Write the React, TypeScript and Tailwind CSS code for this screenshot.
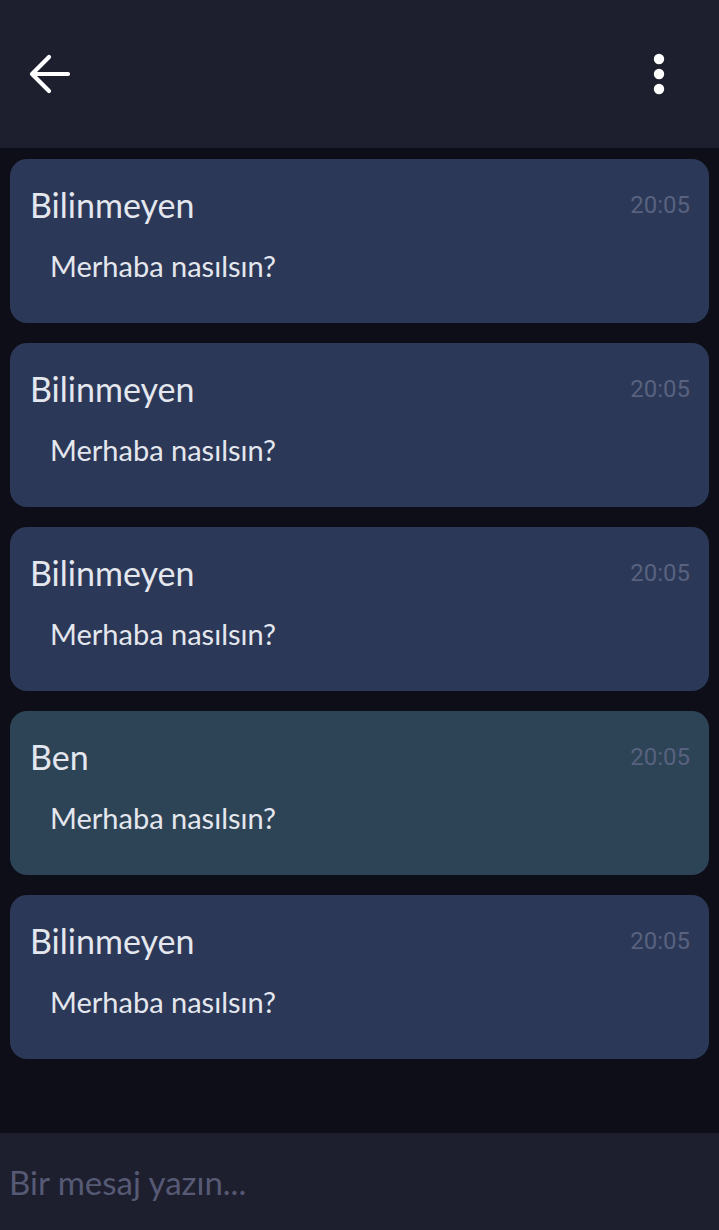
const messages = [
  { from: "Bilinmeyen", text: "Merhaba nasılsın?", time: "20:05", mine: false },
  { from: "Bilinmeyen", text: "Merhaba nasılsın?", time: "20:05", mine: false },
  { from: "Bilinmeyen", text: "Merhaba nasılsın?", time: "20:05", mine: false },
  { from: "Ben", text: "Merhaba nasılsın?", time: "20:05", mine: true },
  { from: "Bilinmeyen", text: "Merhaba nasılsın?", time: "20:05", mine: false },
]

const BackArrow = () => (
  <svg width="44" height="44" viewBox="0 0 44 44" fill="none">
    <path
      d="M40 22 H4 M21 5 L4 22 L21 39"
      stroke="#ffffff"
      strokeWidth="4.2"
      strokeLinecap="round"
      strokeLinejoin="round"
    />
  </svg>
)

const MoreDots = () => (
  <svg width="12" height="42" viewBox="0 0 12 42" fill="#ffffff">
    <circle cx="6" cy="6" r="5.2" />
    <circle cx="6" cy="21" r="5.2" />
    <circle cx="6" cy="36" r="5.2" />
  </svg>
)

const MessageCard = ({ from, text, time, mine }: { from: string; text: string; time: string; mine: boolean }) => {
  return (
    <div
      className={`h-[164px] rounded-[17px] pl-[20px] pr-[19px] pt-[26px] ${mine ? "bg-[#2d4356]" : "bg-[#2c3857]"}`}
    >
      <div className="flex items-start justify-between">
        <h3 className="text-[34px] leading-[40px] text-[#e4e7ee] font-['Lato',sans-serif]">{from}</h3>
        <span className="mt-[4px] text-[24px] leading-[32px] text-[#58627f] font-['Roboto',sans-serif]">{time}</span>
      </div>
      <p className="mt-[23px] ml-[20px] text-[29px] leading-[36px] text-[#e4e7ee] font-['Lato',sans-serif]">{text}</p>
    </div>
  )
}

export default function App() {
  return (
    <div className="flex h-[1230px] w-full flex-col bg-[#0d0e18] font-['Lato',sans-serif]">
      <header className="flex h-[148px] shrink-0 items-center justify-between bg-[#1e1f2e] pl-[28px] pr-[54px]">
        <button className="flex items-center">
          <BackArrow />
        </button>
        <button className="flex items-center">
          <MoreDots />
        </button>
      </header>
      <main className="flex flex-1 flex-col gap-[20px] px-[10px] pt-[11px]">
        {messages.map((m, i) => (
          <MessageCard key={i} {...m} />
        ))}
      </main>
      <div className="flex h-[97px] shrink-0 items-center bg-[#1e1f2e] pl-[9px]">
        <input
          className="w-full bg-transparent text-[33px] leading-[40px] text-[#e4e7ee] outline-none placeholder:text-[#565a75] font-['Lato',sans-serif]"
          placeholder="Bir mesaj yazın..."
        />
      </div>
    </div>
  )
}
